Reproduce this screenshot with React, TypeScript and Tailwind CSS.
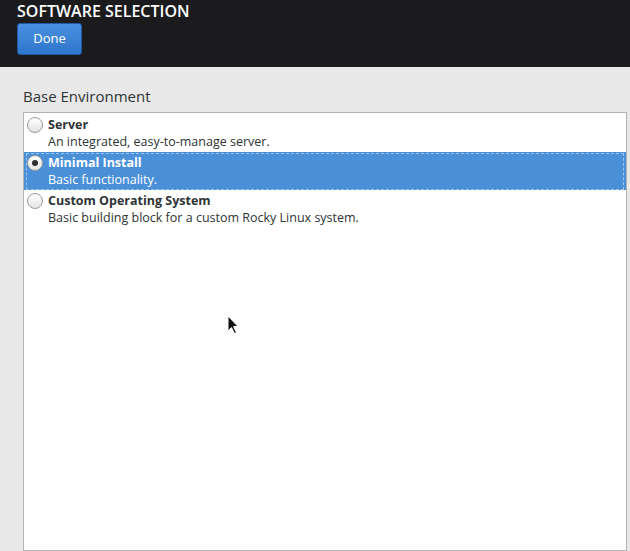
import React from "react";

const envs = [
  { name: "Server", desc: "An integrated, easy-to-manage server." },
  { name: "Minimal Install", desc: "Basic functionality." },
  { name: "Custom Operating System", desc: "Basic building block for a custom Rocky Linux system." },
];

function Radio({ checked }: { checked: boolean }) {
  return (
    <span className="flex h-[16px] w-[16px] shrink-0 items-center justify-center rounded-full border border-[#9a9a9a] bg-gradient-to-b from-[#ffffff] to-[#e4e4e4]">
      {checked && <span className="h-[6px] w-[6px] rounded-full bg-[#2e2e2e]" />}
    </span>
  );
}

export default function App() {
  const selected = 1;
  return (
    <div className="flex h-[551px] w-[630px] flex-col overflow-hidden bg-[#e8e8e8] font-['Open_Sans',sans-serif]">
      {/* header */}
      <div className="flex h-[67px] shrink-0 flex-col bg-[#1b1b1d] px-[17px]">
        <h1 className="mt-[1px] text-[16px] leading-[21px] font-semibold text-white">SOFTWARE SELECTION</h1>
        <button className="mt-[1px] h-[32px] w-[65px] rounded-[3px] border border-[#1e5aa8] bg-gradient-to-b from-[#4a90e0] to-[#2f76cc] text-[13px] text-white">
          Done
        </button>
      </div>

      {/* body */}
      <div className="flex flex-1 flex-col pl-[23px] pr-[3px]">
        <div className="mt-[19px] text-[15px] leading-[20px] text-[#2e3436]">Base Environment</div>
        <div className="mt-[6px] flex-1 border border-[#b3b3b3] bg-white pt-[1px]">
          {envs.map((e, i) => {
            const sel = i === selected;
            return (
              <div
                key={e.name}
                className={`flex h-[38px] px-[2px] pt-[1px] ${sel ? "bg-[#4a90d9] text-white" : "text-[#2e3436]"}`}
              >
                <div className={`flex flex-1 gap-[5px] ${sel ? "border border-dashed border-[#9fc4ee]" : "border border-transparent"}`}>
                  <div className="pt-[1px]">
                    <Radio checked={sel} />
                  </div>
                  <div className="flex flex-col">
                    <span className="text-[12.5px] leading-[17px] font-bold">{e.name}</span>
                    <span className="text-[12.5px] leading-[17px]">{e.desc}</span>
                  </div>
                </div>
              </div>
            );
          })}
          <div className="relative">
            <svg className="absolute left-[203px] top-[87px]" width="14" height="20" viewBox="0 0 14 20">
              <path d="M1 1 L1 16 L4.5 12.5 L7.5 18.5 L9.5 17.5 L6.5 11.5 L11 11.5 Z" fill="#111" stroke="#fff" strokeWidth="1" />
            </svg>
          </div>
        </div>
      </div>
    </div>
  );
}
